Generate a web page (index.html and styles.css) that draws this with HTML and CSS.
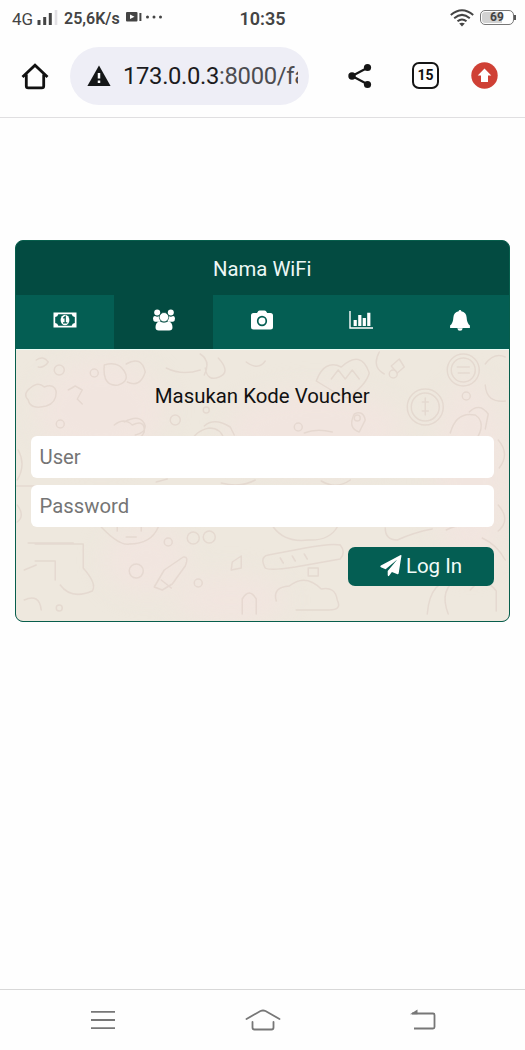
FILE: styles.css
```css
* { box-sizing: border-box; }
body { margin: 0; background: #fefefe; font-family: Roboto, sans-serif; color: #111; }
svg { display: block; flex: none; }
.screen { width: 525px; height: 1050px; display: flex; flex-direction: column; overflow: hidden; }

.status { height: 36px; display: grid; grid-template-columns: 1fr auto 1fr; align-items: center; padding: 0 10px 0 12px; color: #444; }
.status-left { display: flex; align-items: center; font-size: 16px; }
.net { width: 25px; font-size: 17px; padding-top: 2px; }
.signal { margin-right: 5px; }
.speed { width: 61px; font-weight: 600; white-space: nowrap; }
.cam { margin-top: -2px; }
.clock { font-size: 18px; font-weight: 600; padding-top: 1px; margin-right: 2px; }
.status-right { display: flex; justify-content: flex-end; align-items: center; gap: 6px; }
.battery { position: relative; width: 34px; height: 15px; border: 1.5px solid #777; border-radius: 5px; background: linear-gradient(90deg, #d2d2d2 66%, #fff 66%); background-clip: content-box; padding: 1px; font-size: 12px; line-height: 11px; font-weight: 700; text-align: center; margin-right: 1px; margin-top: -1px; }
.battery::after { content: ""; position: absolute; right: -3px; top: 4px; width: 2px; height: 5px; background: #555; }

.toolbar { height: 82px; display: flex; align-items: center; padding: 0 27px 2px 21px; border-bottom: 1px solid #e0dfe1; }
.address { width: 239px; height: 58px; margin-left: 21px; padding: 0 11px 0 17px; border-radius: 29px; background: #eeeef6; display: flex; align-items: center; gap: 12px; }
.url { flex: 1; overflow: hidden; white-space: nowrap; font-size: 23.8px; letter-spacing: -0.33px; line-height: 32px; padding-top: 1px; color: #1c1c1e; }
.url span { color: #4c4c50; }
.share { margin-left: 39px; }
.tab-count { width: 27px; height: 27px; margin-left: 40px; border: 2.5px solid #151515; border-radius: 7px; font-size: 14px; line-height: 23px; font-weight: 700; text-align: center; }
.update { margin-left: 32px; }

.page { flex: 1; padding: 122px 15px 0 14.5px; }
.card { height: 382px; display: flex; flex-direction: column; overflow: hidden; border: 1.5px solid #075e4c; border-radius: 8px; background: #034b41; }
.card-title { margin: 0; height: 54px; line-height: 56px; font-size: 20.3px; font-weight: 400; text-align: center; color: #edf8f6; }
.tabs { height: 54px; display: grid; grid-template-columns: repeat(5, 1fr); background: #045e53; }
.tab { display: flex; align-items: center; justify-content: center; padding-bottom: 4px; }
.tab.active { background: #034b41; }
.login { position: relative; flex: 1; display: flex; flex-direction: column; padding: 33px 15px 0; border-top: 1px solid #e9fbf4; background: #eee8de; }
.doodles { position: absolute; inset: 0; width: 100%; height: 100%; }
.tint { fill: #f1e5df; filter: blur(12px); }
.lines { filter: blur(0.6px); opacity: 0.65; }
.prompt { position: relative; margin: 0 0 26px; height: 27px; line-height: 27px; font-size: 20.4px; font-weight: 400; text-align: center; }
.field { position: relative; width: 100%; height: 42px; margin: 0 0 7px; padding: 0 9px; border: 0; border-radius: 6px; background: #fff; font: 20.3px Roboto, sans-serif; outline: 0; }
.field::placeholder { color: #757575; opacity: 1; }
.submit { position: relative; align-self: flex-end; width: 146px; height: 39px; margin-top: 13px; padding: 0 0 1px; border: 0; border-radius: 7px; background: #045e53; color: #f1fbf8; font: 20.5px Roboto, sans-serif; display: flex; align-items: center; justify-content: center; gap: 4px; }

.navbar { height: 61px; border-top: 1px solid #d8d8d8; display: grid; grid-template-columns: 160px 160px 160px; justify-content: center; justify-items: center; align-items: center; }
```

FILE: index.html
```html
<!DOCTYPE html>
<html lang="id">
<head>
<meta charset="utf-8">
<meta name="viewport" content="width=device-width, initial-scale=1">
<title>Nama WiFi</title>
<link rel="stylesheet" href="styles.css">
</head>
<body>
<div class="screen">
  <header class="status">
    <div class="status-left">
      <span class="net">4G</span>
      <svg class="signal" width="22" height="16" viewBox="0 0 22 16"><path d="M2 10v5M7.700 7v8M13.300 3v12" stroke="#444" stroke-width="3"/><path d="M19 0v15" stroke="#e2e0e4" stroke-width="2.600"/></svg>
      <span class="speed">25,6K/s</span>
      <svg class="cam" width="40" height="12" viewBox="0 0 40 12"><rect x="1" y="1" width="11.500" height="9.500" rx="1" fill="#444"/><path d="M5 3.500v4.500L9.500 5.800z" fill="#fff"/><path d="M15.400 2v8" stroke="#444" stroke-width="2"/><g fill="#444"><circle cx="22.500" cy="6" r="1.500"/><circle cx="29" cy="6" r="1.500"/><circle cx="35.500" cy="6" r="1.500"/></g></svg>
    </div>
    <div class="clock">10:35</div>
    <div class="status-right">
      <svg width="24" height="18" viewBox="0 0 24 18" fill="none" stroke="#444" stroke-width="2"><path d="M.8 6Q12-3.600 23.200 6M4.200 9.200Q12 2.600 19.800 9.200M7.500 12.300Q12 8.600 16.500 12.300"/><path d="M9.200 14.500Q12 12.800 14.800 14.500L12 17.500z" fill="#444" stroke="none"/></svg>
      <div class="battery"><span>69</span></div>
    </div>
  </header>

  <nav class="toolbar">
    <svg class="home" width="28" height="28" viewBox="0 0 28 28" fill="none" stroke="#111" stroke-width="2.800"><path d="M1.500 15 14 3.200l12.500 11.800M5.300 12.500v11.500q0 1.900 1.900 1.900h13.600q1.900 0 1.900-1.900V12.500"/></svg>
    <div class="address">
      <svg width="24" height="22" viewBox="0 0 24 22"><path d="M12 .5 23.600 21H.4z" fill="#151718"/><path d="M12 8v5.500M12 15.500v2.500" stroke="#fff" stroke-width="2.500"/></svg>
      <div class="url">173.0.0.3<span>:8000/fa</span></div>
    </div>
    <svg class="share" width="24" height="26" viewBox="0 0 24 26" fill="#151515"><path d="M20 4.500 4 13l16 8.500" fill="none" stroke="#151515" stroke-width="2.200"/><circle cx="19.500" cy="4.500" r="3.600"/><circle cx="4" cy="13" r="3.700"/><circle cx="19.500" cy="21.500" r="3.600"/></svg>
    <div class="tab-count">15</div>
    <svg class="update" width="27" height="27" viewBox="0 0 27 27"><circle cx="13.500" cy="13.500" r="13.200" fill="#cf4035"/><path d="M13.500 6.500 20.300 13.600h-3.300v6.400h-7v-6.400H6.700z" fill="#fff"/></svg>
  </nav>

  <main class="page">
    <section class="card">
      <h1 class="card-title">Nama WiFi</h1>
      <div class="tabs">
        <div class="tab"><svg width="24" height="16" viewBox="0 0 24 16"><path fill="#fff" fill-rule="evenodd" d="M.5.500h23v15H.5zM5.300 2.200A3.500 3.500 0 0 1 2.200 5v6a3.500 3.500 0 0 1 3.100 2.800h13.400A3.500 3.500 0 0 1 21.800 11V5a3.500 3.500 0 0 1-3.100-2.800z"/><ellipse cx="12" cy="8" rx="4.400" ry="5.200" fill="#fff"/><path d="M10.300 6.300 12.200 4.700V10.500M10 10.800h4.300" fill="none" stroke="#045e53" stroke-width="1.300"/></svg></div>
        <div class="tab active"><svg width="24" height="22" viewBox="0 0 24 22" fill="#fff"><circle cx="5.200" cy="3.500" r="3"/><circle cx="18.800" cy="3.500" r="3"/><path d="M1 9.500Q1 6.800 3 7q2.200 1.300 4.500 0 1.800 2 .5 5.800H3Q1 12.500 1 9.500zM23 9.500Q23 6.800 21 7q-2.200 1.300-4.500 0-1.800 2-.5 5.800h5Q23 12.500 23 9.500z"/><path d="M7.600 12.300q4.400 2.400 8.800 0 4 .8 4.100 6 0 3.200-3.300 3.200H6.800q-3.300 0-3.300-3.200.1-5.200 4.100-6z"/><circle cx="12" cy="8.200" r="4.700" stroke="#034b41" stroke-width=".7"/></svg></div>
        <div class="tab"><svg width="24" height="20" viewBox="0 0 24 20"><path d="M3.500 3H7L8.300 1Q8.800.4 9.700.4h4.800q.9 0 1.400.6L17.200 3h3.300q2.500 0 2.500 2.500v11.500q0 2.500-2.500 2.500h-17Q1 19.500 1 17V5.500Q1 3 3.500 3z" fill="#fff"/><circle cx="12" cy="11" r="4.300" fill="none" stroke="#045e53" stroke-width="1.700"/></svg></div>
        <div class="tab"><svg width="24" height="18" viewBox="0 0 24 18" fill="none" stroke="#fff"><path d="M1 0v17h23" stroke-width="1.400"/><path d="M6.200 15V9M10.800 15V4M15.300 15V7M19.800 15V1.800" stroke-width="3.200"/></svg></div>
        <div class="tab"><svg width="20" height="21" viewBox="0 0 20 21" fill="#fff"><path d="M10 0q1.300 0 1.300 1.300 4.900.8 5.300 6 .3 6.100 3.300 8.300v2.400H.1v-2.400q3-2.200 3.300-8.300.4-5.200 5.300-6Q8.700 0 10 0zM7.300 18.200h5.400q-.3 2.600-2.700 2.600t-2.700-2.600z"/></svg></div>
      </div>
      <form class="login">
        <svg class="doodles" viewBox="0 0 493 271" fill="none" stroke="#e0d2c9" stroke-width="1.500" stroke-linecap="round" stroke-linejoin="round">
          <g class="tint" stroke="none"><ellipse cx="85" cy="60" rx="65" ry="50"/><ellipse cx="300" cy="80" rx="90" ry="40"/><ellipse cx="455" cy="125" rx="38" ry="95"/><ellipse cx="130" cy="210" rx="42" ry="34"/><ellipse cx="215" cy="250" rx="55" ry="25"/></g>
          <g class="lines">
          <path d="M14 38q8-7 14-1 10-4 12 5 0 11-10 14-16 4-18-6-6-6 2-12zM20 10q7-5 12 2-4 6-10 5M52 40l7-4 7 4-5 9 5 5M88 15q14-4 20 6t-6 14q-16 2-14-20zM110 14q15-9 19 8-5 16-18 10M98 75q10-8 18 0 13-6 12 7-3 8-14 8M108 72q17-9 21 4 0 7-10 9"/>
          <path d="M150 18q16 8 34 2M184 4q11 7 4 21M202 8q13 14 1 19t-14-9M188 76q10-9 26 1l4 8M175 93q3-12 18-15 12 0 15 12M230 12q12 9 19-1"/>
          <path d="M300 31q8-22 25-14 20-18 28 6-3 12-22 25-16-7-31-17zM315 29l7-9 7 9 7-9 7 9M363 2q-8 15 5 22M375 16l8-7 5 8-7 6z"/>
          <circle cx="447" cy="20" r="16"/><circle cx="447" cy="20" r="12"/><path d="M441 17h12M442 23h11"/>
          <circle cx="409" cy="57" r="18"/><circle cx="409" cy="57" r="14"/><path d="M409 48v17M406 52h6M406 61h6"/>
          <path d="M338 64q9-4 11 6l-6 12q-12-4-5-18zM434 83q6-22 25-18 12 8 0 26M469 14q9-12 20-7M489 51q-19 2-20-16M453 62q10-10 19 2l-3 15M288 83q12-5 28-1"/>
          <path d="M0 136h35M140 132l11-3M205 133q20 5 34-3M305 131q15 9 29-1"/>
          <path d="M12 193h45M65 194h2v24q14 16 9 23-21 9-32-6M19 211h20v19M85 177q18 19 28 17 22 0 29-17M101 177v4M125 177v4M110 187h10M19 194h46"/>
          <path d="M138 237l10-17 19-13q6-1 2 9l-13 18-10 6zM145 230l10 8M216 212l9-6v12l-10 2zM226 264v-15q7-12 14 0v15"/>
          <circle cx="120" cy="221" r="7"/><circle cx="152" cy="192" r="4"/><circle cx="177" cy="188" r="6"/><circle cx="193" cy="187" r="6"/><circle cx="182" cy="233" r="4"/><circle cx="43" cy="258" r="3"/>
          <path d="M252 205q-9 2-3 13 4 3 30-1l45-8q6-7 0-14-9-2-35 3zM264 208l3 5M276 206l3 5M288 204l3 5M257 177q12 16 35 13 21 1 29-13M369 178q0 12 12 12 18-8 35-11M430 180q11-6 26-4"/>
          <path d="M260 251q-4-14 13-15 16-13 32 3 14-3 16 11 5 10-8 10h-33M292 218h10v8h-10zM411 264q3-36 29-33M432 264q-10-25 11-37M466 188q15 7 23 22M454 240q13-16 26 1v20"/>
          <g><circle cx="43" cy="20" r="5"/><circle cx="78" cy="23" r="4"/><circle cx="44" cy="74" r="4"/><circle cx="159" cy="70" r="5"/><circle cx="190" cy="60" r="3"/><circle cx="282" cy="77" r="4"/><circle cx="341" cy="68" r="3"/><circle cx="450" cy="46" r="4"/><circle cx="377" cy="24" r="4"/></g>
          <path d="M2 100q8 15-1 30M482 90q12 14 1 28M482 155q13 15 0 26M1 155q8 11 0 17M8 220l12-5M8 250q15-7 17 10"/>
          </g>
        </svg>
        <h2 class="prompt">Masukan Kode Voucher</h2>
        <input class="field" type="text" placeholder="User">
        <input class="field" type="password" placeholder="Password">
        <button class="submit" type="button"><svg width="22" height="22" viewBox="0 0 22 22" fill="#fff"><path d="M21.500.4 18.700 18.200q-.3 1.500-1.800.9l-5-2.100-2.800 3.800q-1.200 1-1.400-.8v-4L17.300 4.500 5.600 14.300.9 12.200q-1.200-.9 0-1.700L20.200.2q1-.5 1.300.2z"/></svg><span>Log In</span></button>
      </form>
    </section>
  </main>

  <footer class="navbar">
    <svg width="24" height="20" viewBox="0 0 24 20" stroke="#777" stroke-width="1.800"><path d="M0 1.800h24M0 10h24M0 18.200h24"/></svg>
    <svg width="36" height="24" viewBox="0 0 36 24" fill="none" stroke="#777" stroke-width="1.800" stroke-linecap="round"><path d="M1.500 11 15.500 3q2.500-1 5 0l14 8M7.500 14v5.500q0 2 2 2h17q2 0 2-2V14"/></svg>
    <svg width="26" height="22" viewBox="0 0 26 22" fill="none" stroke="#777" stroke-width="1.800"><path d="M2 4.500h21q1.500 0 1.500 1.500v12q0 1.500-1.500 1.500H4"/><path d="M0 5.300 7.500.5v4.800z" fill="#777" stroke="none"/></svg>
  </footer>
</div>
</body>
</html>
```
